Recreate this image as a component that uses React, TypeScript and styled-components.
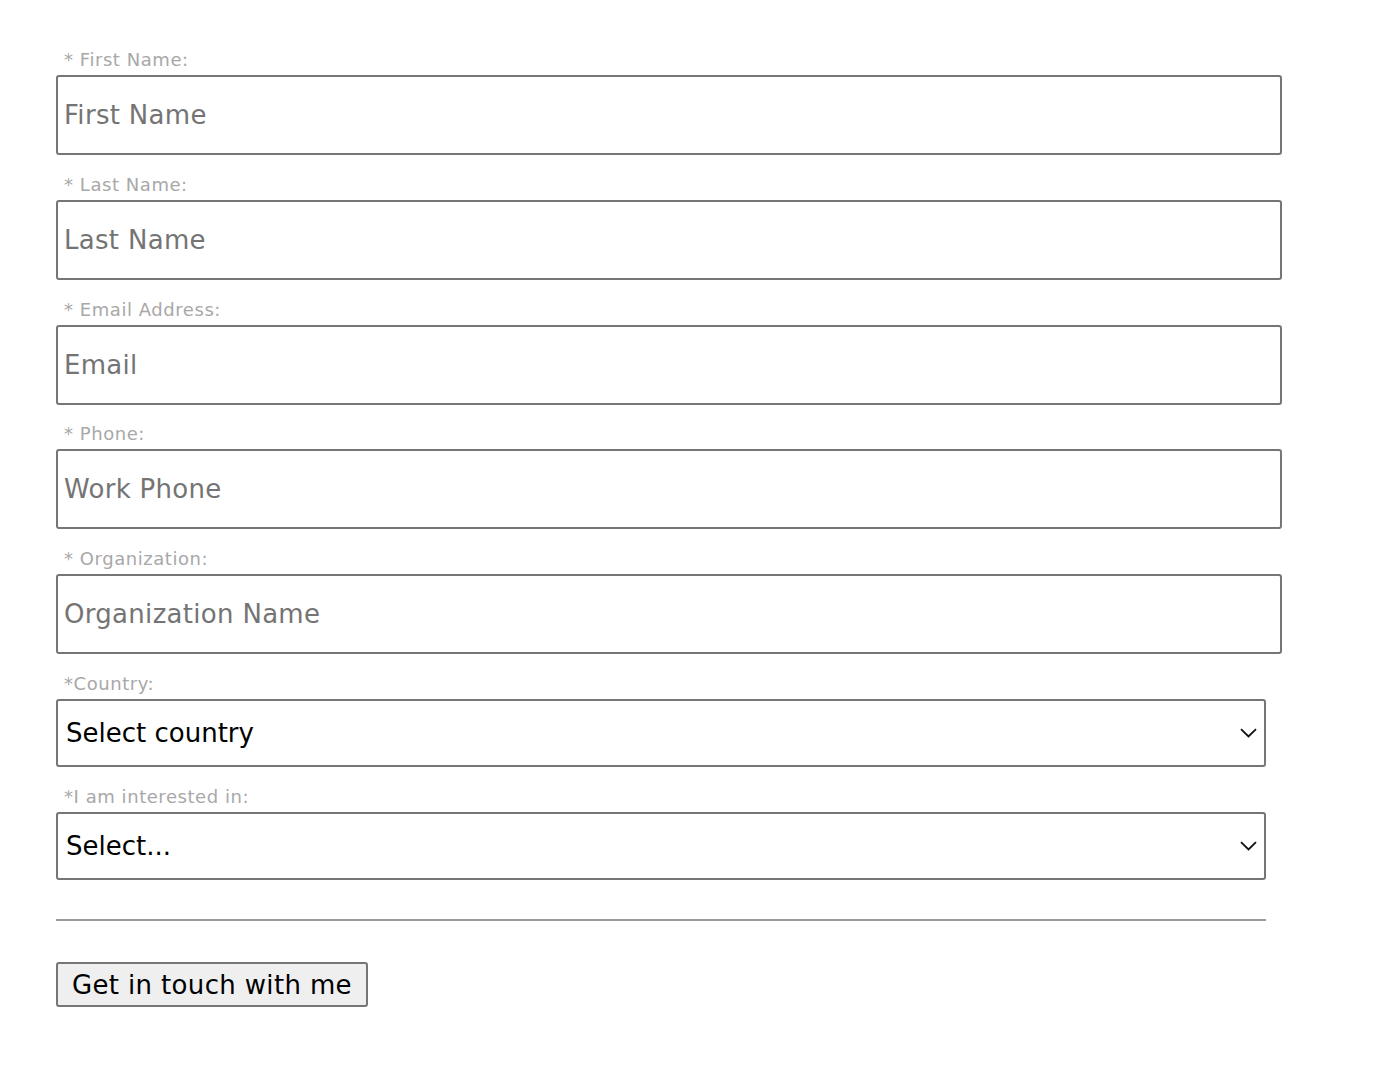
import React from "react";
import styled, { createGlobalStyle } from "styled-components";

const Global = createGlobalStyle`
  html, body { margin: 0; padding: 0; background: #fff; }
  body { font-family: "DejaVu Sans", "Liberation Sans", sans-serif; }
`;

const Form = styled.form`
  display: flex;
  flex-direction: column;
  width: 1226px;
  padding: 49px 0 40px 56px;
`;

const Field = styled.div<{ $narrow?: boolean }>`
  display: flex;
  flex-direction: column;
  gap: 4px;
  width: ${(p) => (p.$narrow ? "1210px" : "1226px")};
  margin-bottom: 18.75px;
`;

const Label = styled.label`
  padding-left: 8px;
  font-size: 18px;
  line-height: 22px;
  color: #a8a8a8;
  letter-spacing: 0.55px;
`;

const Input = styled.input`
  box-sizing: border-box;
  height: 80px;
  width: 100%;
  border: 2px solid #767676;
  border-radius: 3px;
  padding: 0 6px;
  font-family: inherit;
  font-size: 26px;
  letter-spacing: 0.3px;
  color: #333;
  outline: none;
  &::placeholder { color: #747474; opacity: 1; }
`;

const SelectWrap = styled.div`
  position: relative;
  width: 100%;
`;

const Select = styled.select`
  box-sizing: border-box;
  display: block;
  appearance: none;
  height: 68px;
  width: 100%;
  border: 2px solid #767676;
  border-radius: 3px;
  padding: 0 40px 0 8px;
  font-family: inherit;
  font-size: 26px;
  color: #000;
  background: #fff;
  outline: none;
`;

const Chevron = styled.svg`
  position: absolute;
  right: 9px;
  top: 50%;
  margin-top: -5px;
  width: 17px;
  height: 10px;
  pointer-events: none;
`;

const Divider = styled.hr`
  box-sizing: border-box;
  width: 1210px;
  margin: 21px 0 41px;
  border: 0;
  border-top: 2px solid #9a9a9a;
  height: 0;
`;

const Button = styled.button`
  align-self: flex-start;
  box-sizing: border-box;
  height: 45px;
  padding: 0 14px;
  border: 2px solid #767676;
  border-radius: 3px;
  background: #efefef;
  font-family: inherit;
  font-size: 26px;
  letter-spacing: 0.35px;
  color: #000;
`;

const textFields = [
  { label: "* First Name:", ph: "First Name" },
  { label: "* Last Name:", ph: "Last Name" },
  { label: "* Email Address:", ph: "Email" },
  { label: "* Phone:", ph: "Work Phone" },
  { label: "* Organization:", ph: "Organization Name" },
];

function SelectField({ label, text }: { label: string; text: string }) {
  return (
    <Field $narrow>
      <Label>{label}</Label>
      <SelectWrap>
        <Select defaultValue="">
          <option value="">{text}</option>
        </Select>
        <Chevron viewBox="0 0 17 10" fill="none">
          <path d="M1 1.2 L8.5 8.5 L16 1.2" stroke="#111" strokeWidth="1.8" />
        </Chevron>
      </SelectWrap>
    </Field>
  );
}

export default function App() {
  return (
    <>
      <Global />
      <Form onSubmit={(e) => e.preventDefault()}>
        {textFields.map((f) => (
          <Field key={f.label}>
            <Label>{f.label}</Label>
            <Input placeholder={f.ph} />
          </Field>
        ))}
        <SelectField label="*Country:" text="Select country" />
        <SelectField label="*I am interested in:" text="Select..." />
        <Divider />
        <Button type="submit">Get in touch with me</Button>
      </Form>
    </>
  );
}
